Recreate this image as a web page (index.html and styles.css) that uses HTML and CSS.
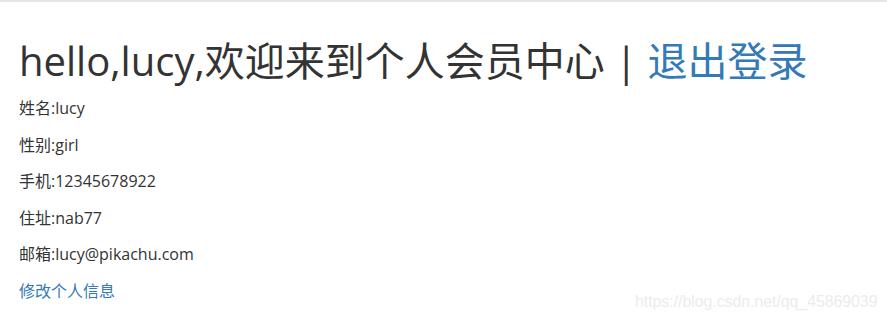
FILE: index.html
```html
<!DOCTYPE html>
<html lang="zh-CN">
<head>
<meta charset="utf-8">
<title>个人会员中心</title>
<link rel="stylesheet" href="styles.css">
</head>
<body>
<div class="page">
  <h1 class="title">hello,lucy,欢迎来到个人会员中心 | <a class="link" href="#">退出登录</a></h1>
  <p class="row">姓名:lucy</p>
  <p class="row">性别:girl</p>
  <p class="row">手机:12345678922</p>
  <p class="row">住址:nab77</p>
  <p class="row">邮箱:lucy@pikachu.com</p>
  <a class="link edit" href="#">修改个人信息</a>
</div>
<div class="watermark">https://blog.csdn.net/qq_45869039</div>
</body>
</html>
```
FILE: styles.css
```css
html, body {
  margin: 0;
  padding: 0;
  background: #fff;
}
body {
  border-top: 2px solid #e6e6e6;
  font-family: "Open Sans", "Noto Sans CJK SC", sans-serif;
  font-size: 16px;
  color: #333;
  height: 319px;
  position: relative;
  overflow: hidden;
}
.page {
  padding-left: 19px;
}
.title {
  margin: 37px 0 12px;
  font-size: 40px;
  font-weight: 400;
  line-height: 44px;
  color: #333;
}
.link {
  color: #337ab7;
  text-decoration: none;
}
.row {
  margin: 0 0 10px;
  line-height: 26.6px;
}
.edit {
  display: block;
  line-height: 26.6px;
  margin-top: 0;
}
.watermark {
  position: absolute;
  left: 635px;
  top: 290px;
  font-family: "Liberation Sans", Arial, sans-serif;
  font-size: 15.8px;
  line-height: 20px;
  color: #ececec;
  white-space: nowrap;
}
```
